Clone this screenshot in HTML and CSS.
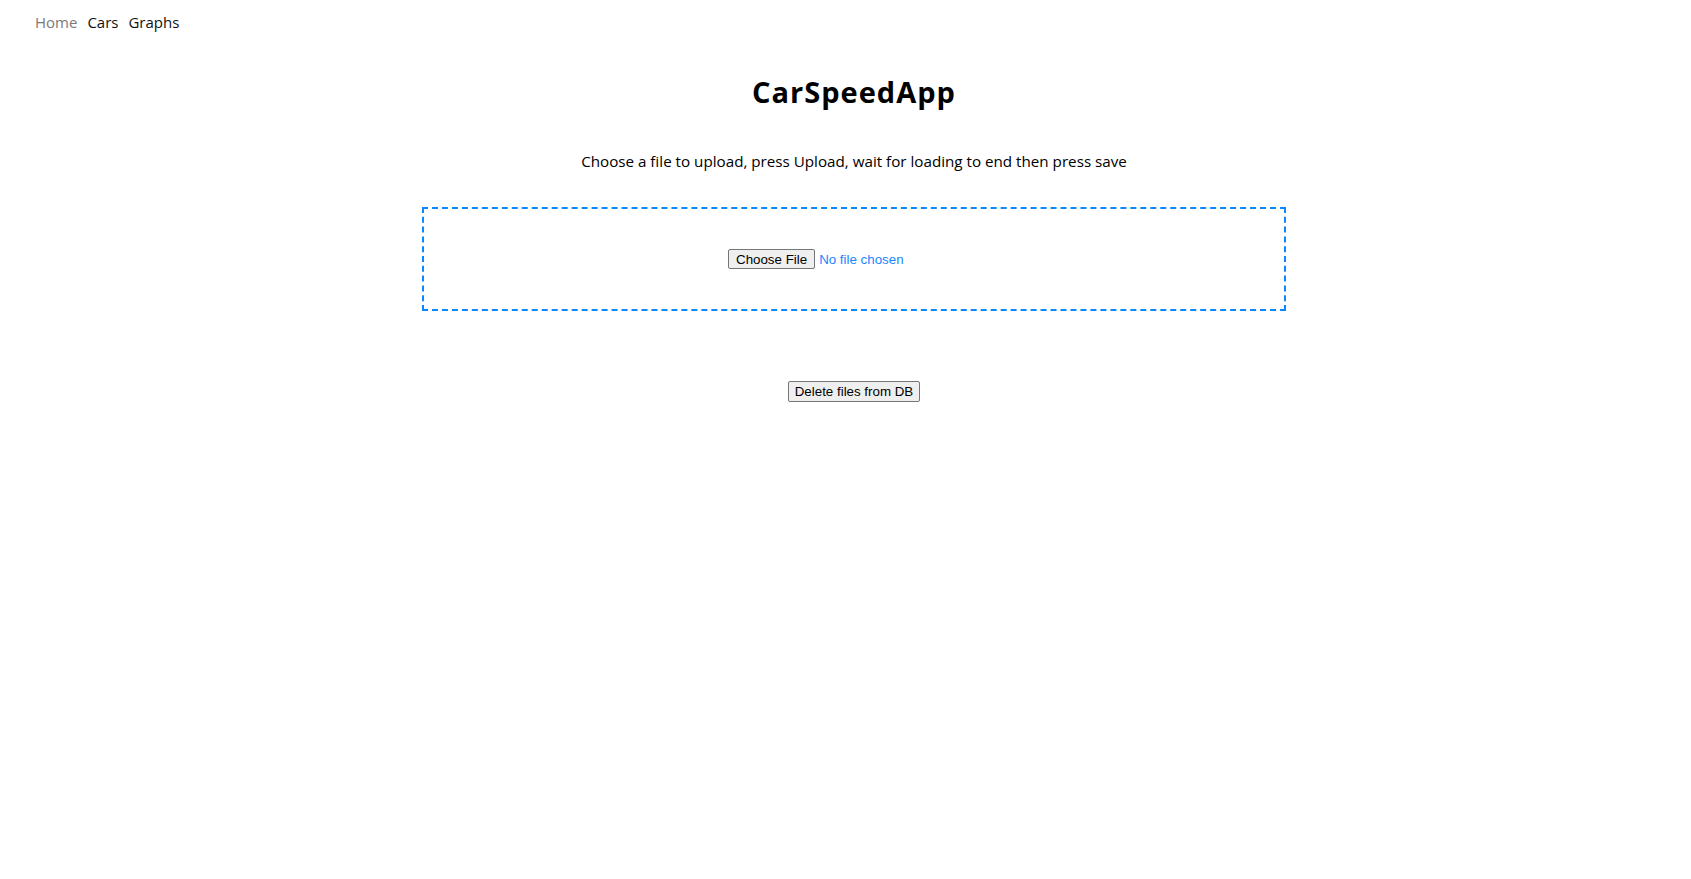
FILE: index.html
```html
<!DOCTYPE html>
<html lang="en">
<head>
<meta charset="utf-8">
<title>CarSpeedApp</title>
<link rel="stylesheet" href="styles.css">
</head>
<body>
<nav class="nav">
  <a class="nav-link nav-link-muted" href="#">Home</a>
  <a class="nav-link" href="#">Cars</a>
  <a class="nav-link" href="#">Graphs</a>
</nav>
<main class="main">
  <h1 class="title">CarSpeedApp</h1>
  <p class="subtitle">Choose a file to upload, press Upload, wait for loading to end then press save</p>
  <div class="dropzone">
    <input class="file-input" type="file">
  </div>
  <div class="actions">
    <button class="btn" type="button">Delete files from DB</button>
  </div>
</main>
</body>
</html>
```
FILE: styles.css
```css
html, body {
  margin: 0;
  padding: 0;
  background: #ffffff;
}

body {
  font-family: "Open Sans", "Noto Sans", sans-serif;
  color: #000000;
}

.nav {
  display: flex;
  gap: 10px;
  padding: 10px 0 0 35px;
  height: 24px;
}

.nav-link {
  font-size: 15px;
  line-height: 24px;
  color: #111111;
  text-decoration: none;
}

.nav-link-muted {
  color: #7a7a7a;
}

.main {
  padding-left: 17px;
  text-align: center;
}

.title {
  margin: 42px 0 0;
  font-size: 29px;
  line-height: 32px;
  font-weight: 700;
  letter-spacing: 1px;
}

.subtitle {
  margin: 41px 0 0;
  font-size: 15.2px;
  line-height: 24px;
}

.dropzone {
  box-sizing: border-box;
  width: 864px;
  height: 104px;
  margin: 34px auto 0;
  border: 2px dashed #0a88ff;
  display: flex;
  align-items: center;
  justify-content: center;
}

.file-input {
  font-family: "Liberation Sans", Arial, sans-serif;
  font-size: 13.333px;
  color: #1c86ff;
  width: 252px;
}

.file-input::file-selector-button {
  font-family: "Liberation Sans", Arial, sans-serif;
  font-size: 13.333px;
  color: #000000;
  background: #efefef;
  border: 1px solid #767676;
  border-radius: 2px;
  padding: 2px 7px 1px;
  margin-right: 4px;
}

.actions {
  margin-top: 68px;
}

.btn {
  font-family: "Liberation Sans", Arial, sans-serif;
  font-size: 13.333px;
  color: #000000;
  background: #efefef;
  border: 1px solid #767676;
  border-radius: 2px;
  padding: 2px 6px;
  margin: 0;
}
```
